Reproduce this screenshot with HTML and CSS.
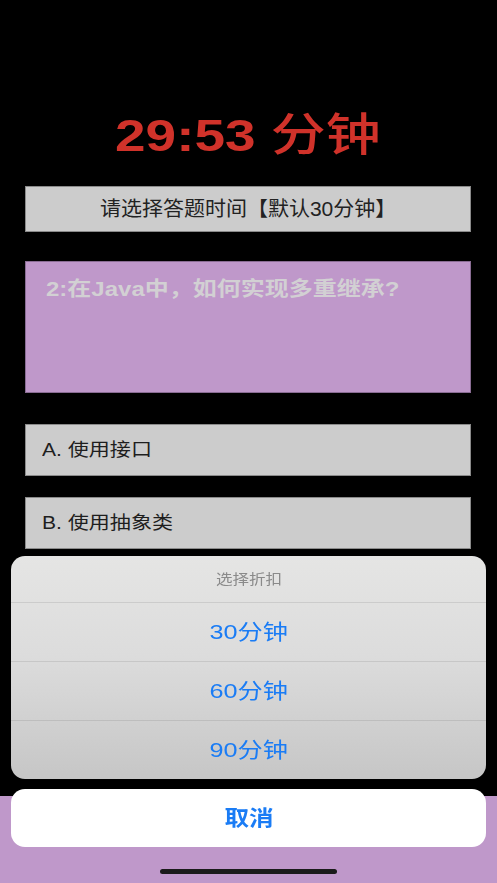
FILE: index.html
```html
<!DOCTYPE html>
<html lang="zh-CN">
<head>
  <meta charset="UTF-8">
  <meta name="viewport" content="width=device-width, initial-scale=1.0">
  <title>答题</title>
  <link rel="stylesheet" href="styles.css">
</head>
<body>
  <div class="page">
    <div class="timer"><span class="txt">29:53 <span class="timer-unit">分钟</span></span></div>

    <div class="picker"><span class="txt">请选择答题时间【默认30分钟】</span></div>

    <div class="question"><span class="txt">2:在Java中，如何实现多重继承?</span></div>

    <div class="option"><span class="txt">A. 使用接口</span></div>
    <div class="option option-b"><span class="txt">B. 使用抽象类</span></div>
  </div>

  <div class="footer"></div>

  <!-- action sheet -->
  <div class="sheet">
    <div class="sheet-group">
      <div class="sheet-title"><span class="txt">选择折扣</span></div>
      <div class="sheet-item"><span class="txt">30分钟</span></div>
      <div class="sheet-item"><span class="txt">60分钟</span></div>
      <div class="sheet-item"><span class="txt">90分钟</span></div>
    </div>
    <div class="sheet-cancel"><span class="txt">取消</span></div>
  </div>

  <div class="home-bar"></div>
</body>
</html>
```

FILE: styles.css
```css
html, body {
  height: 100%;
}

body {
  margin: 0;
  background: #000;
  font-family: "Liberation Sans", "Noto Sans CJK SC", sans-serif;
  display: flex;
  flex-direction: column;
}

/* the screenshot is wider than it is tall, so text is drawn stretched */
.txt {
  display: inline-block;
  white-space: nowrap;
}

.page {
  padding: 0 26px 0 25px;
}

.timer {
  margin-top: 111px;
  height: 50px;
  line-height: 50px;
  text-align: center;
  color: #d0322a;
  font-size: 45px;
  font-weight: bold;
}

.timer .txt {
  transform: scaleX(1.22);
}

.timer-unit {
  font-weight: 500;
}

.picker {
  margin-top: 25px;
  height: 44px;
  line-height: 44px;
  background: #cccccc;
  border: 1px solid #8a8a8a;
  text-align: center;
  font-size: 20px;
  color: #222;
}

.picker .txt {
  transform: scaleX(1.05);
}

.question {
  margin-top: 29px;
  height: 116px;
  padding: 14px 20px 0;
  background: #bf98ca;
  border: 1px solid #8a6d94;
  font-size: 20px;
  line-height: 26px;
  font-weight: bold;
  color: #d2d0d3;
}

.question .txt {
  transform: scaleX(1.2);
  transform-origin: left center;
}

.option {
  margin-top: 31px;
  height: 50px;
  line-height: 50px;
  padding-left: 16px;
  background: #cccccc;
  border: 1px solid #8a8a8a;
  font-size: 18px;
  color: #1e1e1e;
}

.option .txt {
  transform: scaleX(1.17);
  transform-origin: left center;
}

.option-b {
  margin-top: 21px;
}

.footer {
  margin-top: auto;
  height: 87px;
  background: #bf98ca;
}

.sheet {
  position: fixed;
  left: 11px;
  right: 11px;
  bottom: 36px;
  display: flex;
  flex-direction: column;
  gap: 10px;
}

.sheet-group {
  border-radius: 14px;
  overflow: hidden;
  background: linear-gradient(#e5e5e4, #dcdcdc 45%, #c6c6c6);
}

.sheet-title {
  height: 46px;
  line-height: 46px;
  text-align: center;
  font-size: 14px;
  color: #8a8a8a;
}

.sheet-title .txt {
  transform: scaleX(1.18);
}

.sheet-item {
  height: 58px;
  line-height: 58px;
  border-top: 1px solid rgba(0, 0, 0, 0.09);
  text-align: center;
  font-size: 21px;
  color: #1a7cf5;
}

.sheet-item .txt {
  transform: scaleX(1.2);
}

.sheet-cancel {
  height: 58px;
  line-height: 58px;
  border-radius: 14px;
  background: #fff;
  text-align: center;
  font-size: 21px;
  font-weight: bold;
  color: #1a7cf5;
}

.sheet-cancel .txt {
  transform: scaleX(1.17);
}

.home-bar {
  position: fixed;
  left: 160px;
  bottom: 9px;
  width: 177px;
  height: 5px;
  border-radius: 3px;
  background: #1b1b1b;
}
```
